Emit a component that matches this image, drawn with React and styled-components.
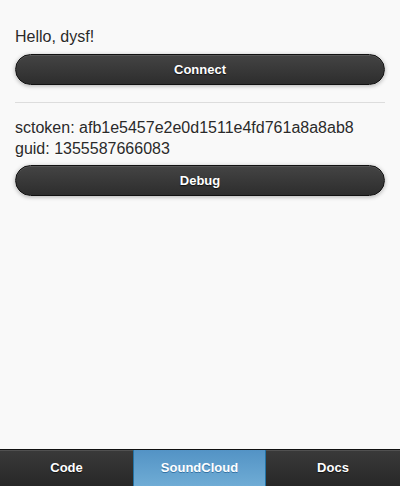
import React from "react";
import styled, { createGlobalStyle } from "styled-components";

const GlobalStyle = createGlobalStyle`
  html, body {
    margin: 0;
    padding: 0;
    height: 100%;
  }
  body {
    background: #f9f9f9;
    font-family: Helvetica, "Liberation Sans", Arial, sans-serif;
    color: #333;
  }
  #root {
    height: 100%;
  }
`;

const Page = styled.div`
  display: flex;
  flex-direction: column;
  min-height: 100%;
  background: #f9f9f9;
`;

const Content = styled.main`
  flex: 1;
  padding: 28px 15px 0;
`;

const Text = styled.p`
  margin: 0;
  font-size: 16px;
  line-height: ${(p) => p.$lh || "18px"};
  color: #2a2a2a;
  text-shadow: 0 1px 0 #fff;
`;

const Button = styled.button`
  display: block;
  width: 100%;
  height: 31px;
  margin-top: ${(p) => p.$mt || "8px"};
  padding: 0 20px;
  border: 1px solid #111;
  border-radius: 16px;
  background: linear-gradient(#444, #2d2d2d);
  box-shadow: 0 1px 4px rgba(0, 0, 0, 0.3), inset 0 1px 0 rgba(255, 255, 255, 0.1);
  color: #fff;
  font-family: Helvetica, "Liberation Sans", Arial, sans-serif;
  font-size: 13px;
  font-weight: bold;
  text-shadow: 0 1px 1px #111;
  cursor: pointer;
`;

const Divider = styled.hr`
  margin: 17px 0 14px;
  border: 0;
  border-top: 1px solid #ddd;
`;

const NavBar = styled.nav`
  display: grid;
  grid-template-columns: 133px 133px 1fr;
  border-top: 1px solid #111;
  background: #111;
`;

const Tab = styled.a`
  display: flex;
  align-items: center;
  justify-content: center;
  height: 36px;
  padding-bottom: 1px;
  font-size: 13px;
  font-weight: bold;
  color: #fff;
  text-decoration: none;
  box-sizing: border-box;
  ${(p) =>
    p.$active
      ? `
    background: linear-gradient(#5393c5, #6facd5);
    border-left: 1px solid #2373a5;
    border-right: 1px solid #2373a5;
    text-shadow: 0 1px 0 #3373a5;
  `
      : `
    background: linear-gradient(#3a3a3a, #282828);
    box-shadow: inset 0 1px 0 rgba(255, 255, 255, 0.12);
    text-shadow: 0 1px 1px #111;
  `}
`;

export default function App() {
  return (
    <Page>
      <GlobalStyle />
      <Content>
        <Text>Hello, dysf!</Text>
        <Button>Connect</Button>
        <Divider />
        <Text $lh="21px">sctoken: afb1e5457e2e0d1511e4fd761a8a8ab8</Text>
        <Text $lh="21px">guid: 1355587666083</Text>
        <Button $mt="6px">Debug</Button>
      </Content>
      <NavBar>
        <Tab href="#">Code</Tab>
        <Tab href="#" $active>
          SoundCloud
        </Tab>
        <Tab href="#">Docs</Tab>
      </NavBar>
    </Page>
  );
}
